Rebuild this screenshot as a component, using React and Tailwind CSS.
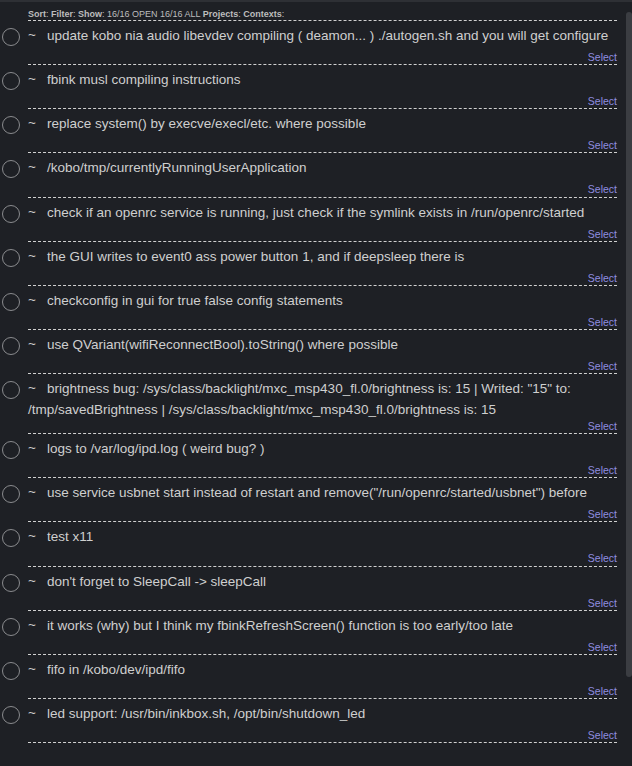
import React from 'react';

const tasks = [
    'update kobo nia audio libevdev compiling ( deamon... ) ./autogen.sh and you will get configure',
    'fbink musl compiling instructions',
    'replace system() by execve/execl/etc. where possible',
    '/kobo/tmp/currentlyRunningUserApplication',
    'check if an openrc service is running, just check if the symlink exists in /run/openrc/started',
    'the GUI writes to event0 ass power button 1, and if deepsleep there is',
    'checkconfig in gui for true false config statements',
    'use QVariant(wifiReconnectBool).toString() where possible',
    'brightness bug: /sys/class/backlight/mxc_msp430_fl.0/brightness is: 15 | Writed: "15" to: /tmp/savedBrightness | /sys/class/backlight/mxc_msp430_fl.0/brightness is: 15',
    'logs to /var/log/ipd.log ( weird bug? )',
    'use service usbnet start instead of restart and remove("/run/openrc/started/usbnet") before',
    'test x11',
    "don't forget to SleepCall -> sleepCall",
    'it works (why) but I think my fbinkRefreshScreen() function is too early/too late',
    'fifo in /kobo/dev/ipd/fifo',
    'led support: /usr/bin/inkbox.sh, /opt/bin/shutdown_led',
];

const TaskRow = ({ text }) => (
    <div className="flex">
        <div className="w-[28px] shrink-0 pt-[7px] pl-[2px]">
            <div className="w-[18px] h-[18px] rounded-full border-[1.5px] border-[#8a8b8e]"></div>
        </div>
        <div className="flex-1 border-b border-dashed border-[#d0d0d0] pt-[4px] pb-[1.14px]">
            <p className="min-h-[26px] text-[13.5px] leading-[21px] text-[#cfcfcf]">
                <span className="inline-block w-[19px] align-top leading-[19px]">~</span>
                {text}
            </p>
            <div className="text-right text-[10.5px] leading-[12px] text-[#8f8de0]">Select</div>
        </div>
    </div>
);

const App = () => {
    return (
        <div className="w-[632px] h-[766px] overflow-hidden bg-[#1e2025] flex flex-col" style={{ fontFamily: '"Liberation Sans", Arial, sans-serif' }}>
            <div className="h-[2px] bg-[#2e3035] shrink-0"></div>
            <div className="flex flex-1 min-h-0">
                <div className="flex-1 pr-[9px]">
                    <div className="flex">
                        <div className="w-[28px] shrink-0"></div>
                        <div className="flex-1 border-b border-dashed border-[#d0d0d0] pt-[8px] pb-[1px] text-[9px] leading-[9px] text-[#bdbdbd]">
                            <span className="font-bold">Sort</span>: <span className="font-bold">Filter</span>: <span className="font-bold">Show</span>: 16/16 OPEN 16/16 ALL <span className="font-bold">Projects</span>: <span className="font-bold">Contexts</span>:
                        </div>
                    </div>
                    {tasks.map((t, i) => (
                        <TaskRow key={i} text={t} />
                    ))}
                </div>
                <div className="w-[6px] shrink-0 pt-[10px]">
                    <div className="h-[665px] rounded-full bg-[#3b3d42]"></div>
                </div>
            </div>
        </div>
    );
};

export default App;
